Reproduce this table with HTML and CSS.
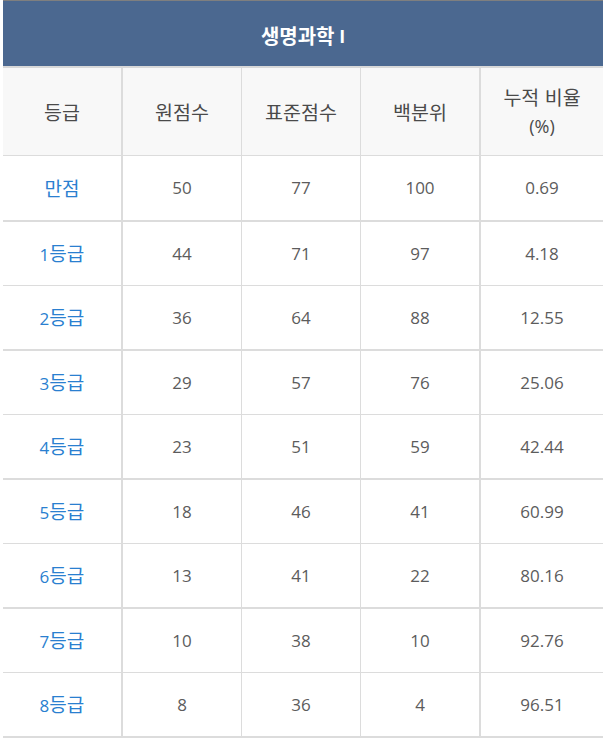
FILE: index.html
```html
<!DOCTYPE html>
<html lang="ko">
<head>
<meta charset="utf-8">
<title>생명과학 I</title>
<link rel="stylesheet" href="styles.css">
</head>
<body>
<div class="table">
  <div class="title"><span class="ko">생명과학</span>&nbsp;I</div>
  <div class="row head">
    <div class="cell"><span class="ko">등급</span></div>
    <div class="cell"><span class="ko">원점수</span></div>
    <div class="cell"><span class="ko">표준점수</span></div>
    <div class="cell"><span class="ko">백분위</span></div>
    <div class="cell"><span><span class="ko">누적 비율</span><br>(%)</span></div>
  </div>
  <div class="row thick tall">
    <div class="cell grade"><span class="ko">만점</span></div><div class="cell">50</div><div class="cell">77</div><div class="cell">100</div><div class="cell">0.69</div>
  </div>
  <div class="row">
    <div class="cell grade"><span>1<span class="ko">등급</span></span></div><div class="cell">44</div><div class="cell">71</div><div class="cell">97</div><div class="cell">4.18</div>
  </div>
  <div class="row thick">
    <div class="cell grade"><span>2<span class="ko">등급</span></span></div><div class="cell">36</div><div class="cell">64</div><div class="cell">88</div><div class="cell">12.55</div>
  </div>
  <div class="row">
    <div class="cell grade"><span>3<span class="ko">등급</span></span></div><div class="cell">29</div><div class="cell">57</div><div class="cell">76</div><div class="cell">25.06</div>
  </div>
  <div class="row thick">
    <div class="cell grade"><span>4<span class="ko">등급</span></span></div><div class="cell">23</div><div class="cell">51</div><div class="cell">59</div><div class="cell">42.44</div>
  </div>
  <div class="row">
    <div class="cell grade"><span>5<span class="ko">등급</span></span></div><div class="cell">18</div><div class="cell">46</div><div class="cell">41</div><div class="cell">60.99</div>
  </div>
  <div class="row thick">
    <div class="cell grade"><span>6<span class="ko">등급</span></span></div><div class="cell">13</div><div class="cell">41</div><div class="cell">22</div><div class="cell">80.16</div>
  </div>
  <div class="row">
    <div class="cell grade"><span>7<span class="ko">등급</span></span></div><div class="cell">10</div><div class="cell">38</div><div class="cell">10</div><div class="cell">92.76</div>
  </div>
  <div class="row thick">
    <div class="cell grade"><span>8<span class="ko">등급</span></span></div><div class="cell">8</div><div class="cell">36</div><div class="cell">4</div><div class="cell">96.51</div>
  </div>
</div>
</body>
</html>
```

FILE: styles.css
```css
* { box-sizing: border-box; }
html, body { margin: 0; padding: 0; background: #fff; }
body {
  padding-left: 3px;
  font-family: "Open Sans", "Noto Sans CJK KR", sans-serif;
  color: #5c5c5c;
}
.ko { font-family: "Noto Sans CJK KR", sans-serif; font-size: 1.12em; }
.table { width: 600px; }
.title {
  height: 68px;
  background: #4b6890;
  border-top: 1px solid #7f7f7f;
  border-bottom: 2px solid #d8d8d8;
  color: #fff;
  font-weight: bold;
  font-size: 18px;
  display: flex;
  align-items: center;
  justify-content: center;
  padding-top: 4px;
}
.title .ko { font-size: 20px; }
.row {
  display: grid;
  grid-template-columns: 120px 119px 119px 120px 1fr;
  height: 64px;
  border-bottom: 1px solid #dcdcdc;
}
.row.thick { height: 65px; border-bottom-width: 2px; }
.row.tall { height: 66px; }
.row.head { height: 88px; background: #f8f8f8; color: #4a4a4a; }
.cell {
  display: flex;
  align-items: center;
  justify-content: center;
  text-align: center;
  font-size: 17px;
  line-height: 28px;
  border-right: 1px solid #dcdcdc;
}
.cell:nth-child(1), .cell:nth-child(4) { border-right-width: 2px; }
.cell:nth-child(5) { border-right: none; }
.head .cell { font-size: 18px; }
.head .ko { font-size: 19.5px; }
.grade { color: #2a7fd0; }
```
